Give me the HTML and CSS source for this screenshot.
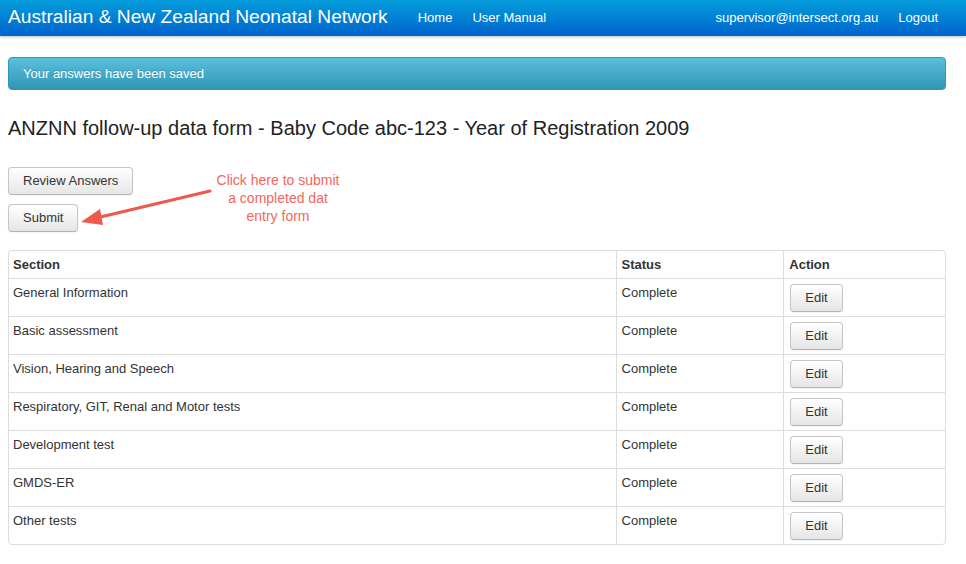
FILE: index.html
```html
<!DOCTYPE html>
<html>
<head>
<meta charset="utf-8">
<link rel="stylesheet" href="styles.css">
</head>
<body>
<div class="navbar">
  <a class="brand">Australian &amp; New Zealand Neonatal Network</a>
  <nav class="nav">
    <a>Home</a>
    <a>User Manual</a>
  </nav>
  <nav class="nav nav-right">
    <a>supervisor@intersect.org.au</a>
    <a>Logout</a>
  </nav>
</div>
<div class="container">
  <div class="alert">Your answers have been saved</div>
  <h1 class="title">ANZNN follow-up data form - Baby Code abc-123 - Year of Registration 2009</h1>
  <div class="actions">
    <button class="btn">Review Answers</button>
    <button class="btn">Submit</button>
    <div class="note">Click here to submit<br>a completed dat<br>entry form</div>
    <svg class="arrow" width="140" height="50" viewBox="0 0 140 50">
      <line x1="132" y1="6" x2="14" y2="34" stroke="#f0574d" stroke-width="3" stroke-linecap="round"/>
      <polygon points="3,37 22,24 25,40" fill="#f0574d"/>
    </svg>
  </div>
  <table class="table">
    <thead>
      <tr><th class="c1">Section</th><th class="c2">Status</th><th class="c3">Action</th></tr>
    </thead>
    <tbody>
      <tr><td>General Information</td><td>Complete</td><td><button class="btn">Edit</button></td></tr>
      <tr><td>Basic assessment</td><td>Complete</td><td><button class="btn">Edit</button></td></tr>
      <tr><td>Vision, Hearing and Speech</td><td>Complete</td><td><button class="btn">Edit</button></td></tr>
      <tr><td>Respiratory, GIT, Renal and Motor tests</td><td>Complete</td><td><button class="btn">Edit</button></td></tr>
      <tr><td>Development test</td><td>Complete</td><td><button class="btn">Edit</button></td></tr>
      <tr><td>GMDS-ER</td><td>Complete</td><td><button class="btn">Edit</button></td></tr>
      <tr><td>Other tests</td><td>Complete</td><td><button class="btn">Edit</button></td></tr>
    </tbody>
  </table>
</div>
</body>
</html>
```
FILE: styles.css
```css
* { box-sizing: border-box; }
html, body { margin: 0; padding: 0; background: #fff; }
body {
  font-family: "Liberation Sans", Arial, Helvetica, sans-serif;
  font-size: 13px;
  line-height: 18px;
  color: #333;
}
.navbar {
  height: 36px;
  background: linear-gradient(#049ddb, #0064cd);
  box-shadow: 0 1px 3px rgba(0,0,0,0.25);
  display: flex;
  align-items: center;
  padding: 0 8px;
  color: #fff;
}
.brand {
  font-size: 19.2px;
  color: #fff;
  margin-right: 30px;
  padding-bottom: 2px;
}
.nav { display: flex; gap: 20px; }
.nav a { color: #fff; font-size: 13px; }
.nav-right { margin-left: auto; gap: 20px; padding-right: 20px; }
.container { padding: 21px 20px 0 8px; }
.alert {
  height: 33px;
  border: 1px solid #2f96b4;
  border-radius: 4px;
  background: linear-gradient(#5bc0de, #2f96b4);
  color: #fff;
  padding: 7px 14px;
  text-shadow: 0 -1px 0 rgba(0,0,0,0.15);
}
.title {
  font-weight: normal;
  font-size: 20px;
  line-height: 24px;
  margin: 26px 0 27px 0;
  color: #222;
}
.actions {
  position: relative;
  display: flex;
  flex-direction: column;
  align-items: flex-start;
  gap: 9px;
  margin-bottom: 18px;
}
.btn {
  font-family: inherit;
  font-size: 13px;
  line-height: 18px;
  color: #333;
  padding: 4px 14px;
  border: 1px solid #c5c5c5;
  border-bottom-color: #b3b3b3;
  border-radius: 4px;
  background: linear-gradient(#ffffff, #e6e6e6);
  box-shadow: inset 0 1px 0 rgba(255,255,255,0.2), 0 1px 2px rgba(0,0,0,0.05);
}
.note {
  position: absolute;
  left: 188px;
  top: 4px;
  width: 164px;
  text-align: center;
  color: #f4665c;
  font-size: 14px;
  line-height: 18px;
}
.arrow {
  position: absolute;
  left: 70px;
  top: 18px;
}
.table {
  width: 938px;
  border: 1px solid #ddd;
  border-radius: 4px;
  border-collapse: separate;
  border-spacing: 0;
}
.table th, .table td {
  text-align: left;
  vertical-align: top;
  padding: 4px 5px;
  line-height: 20px;
  border-left: 1px solid #ddd;
  border-top: 1px solid #ddd;
}
.table th { padding-bottom: 3px; }
.table th:first-child, .table td:first-child { padding-left: 4px; }
.table th { border-top: 0; font-weight: bold; }
.table th:first-child, .table td:first-child { border-left: 0; }
.table td .btn { margin-top: 1px; margin-left: 1px; }
.c1 { width: 608px; }
.c2 { width: 168px; }
.c3 { width: 162px; }
```
